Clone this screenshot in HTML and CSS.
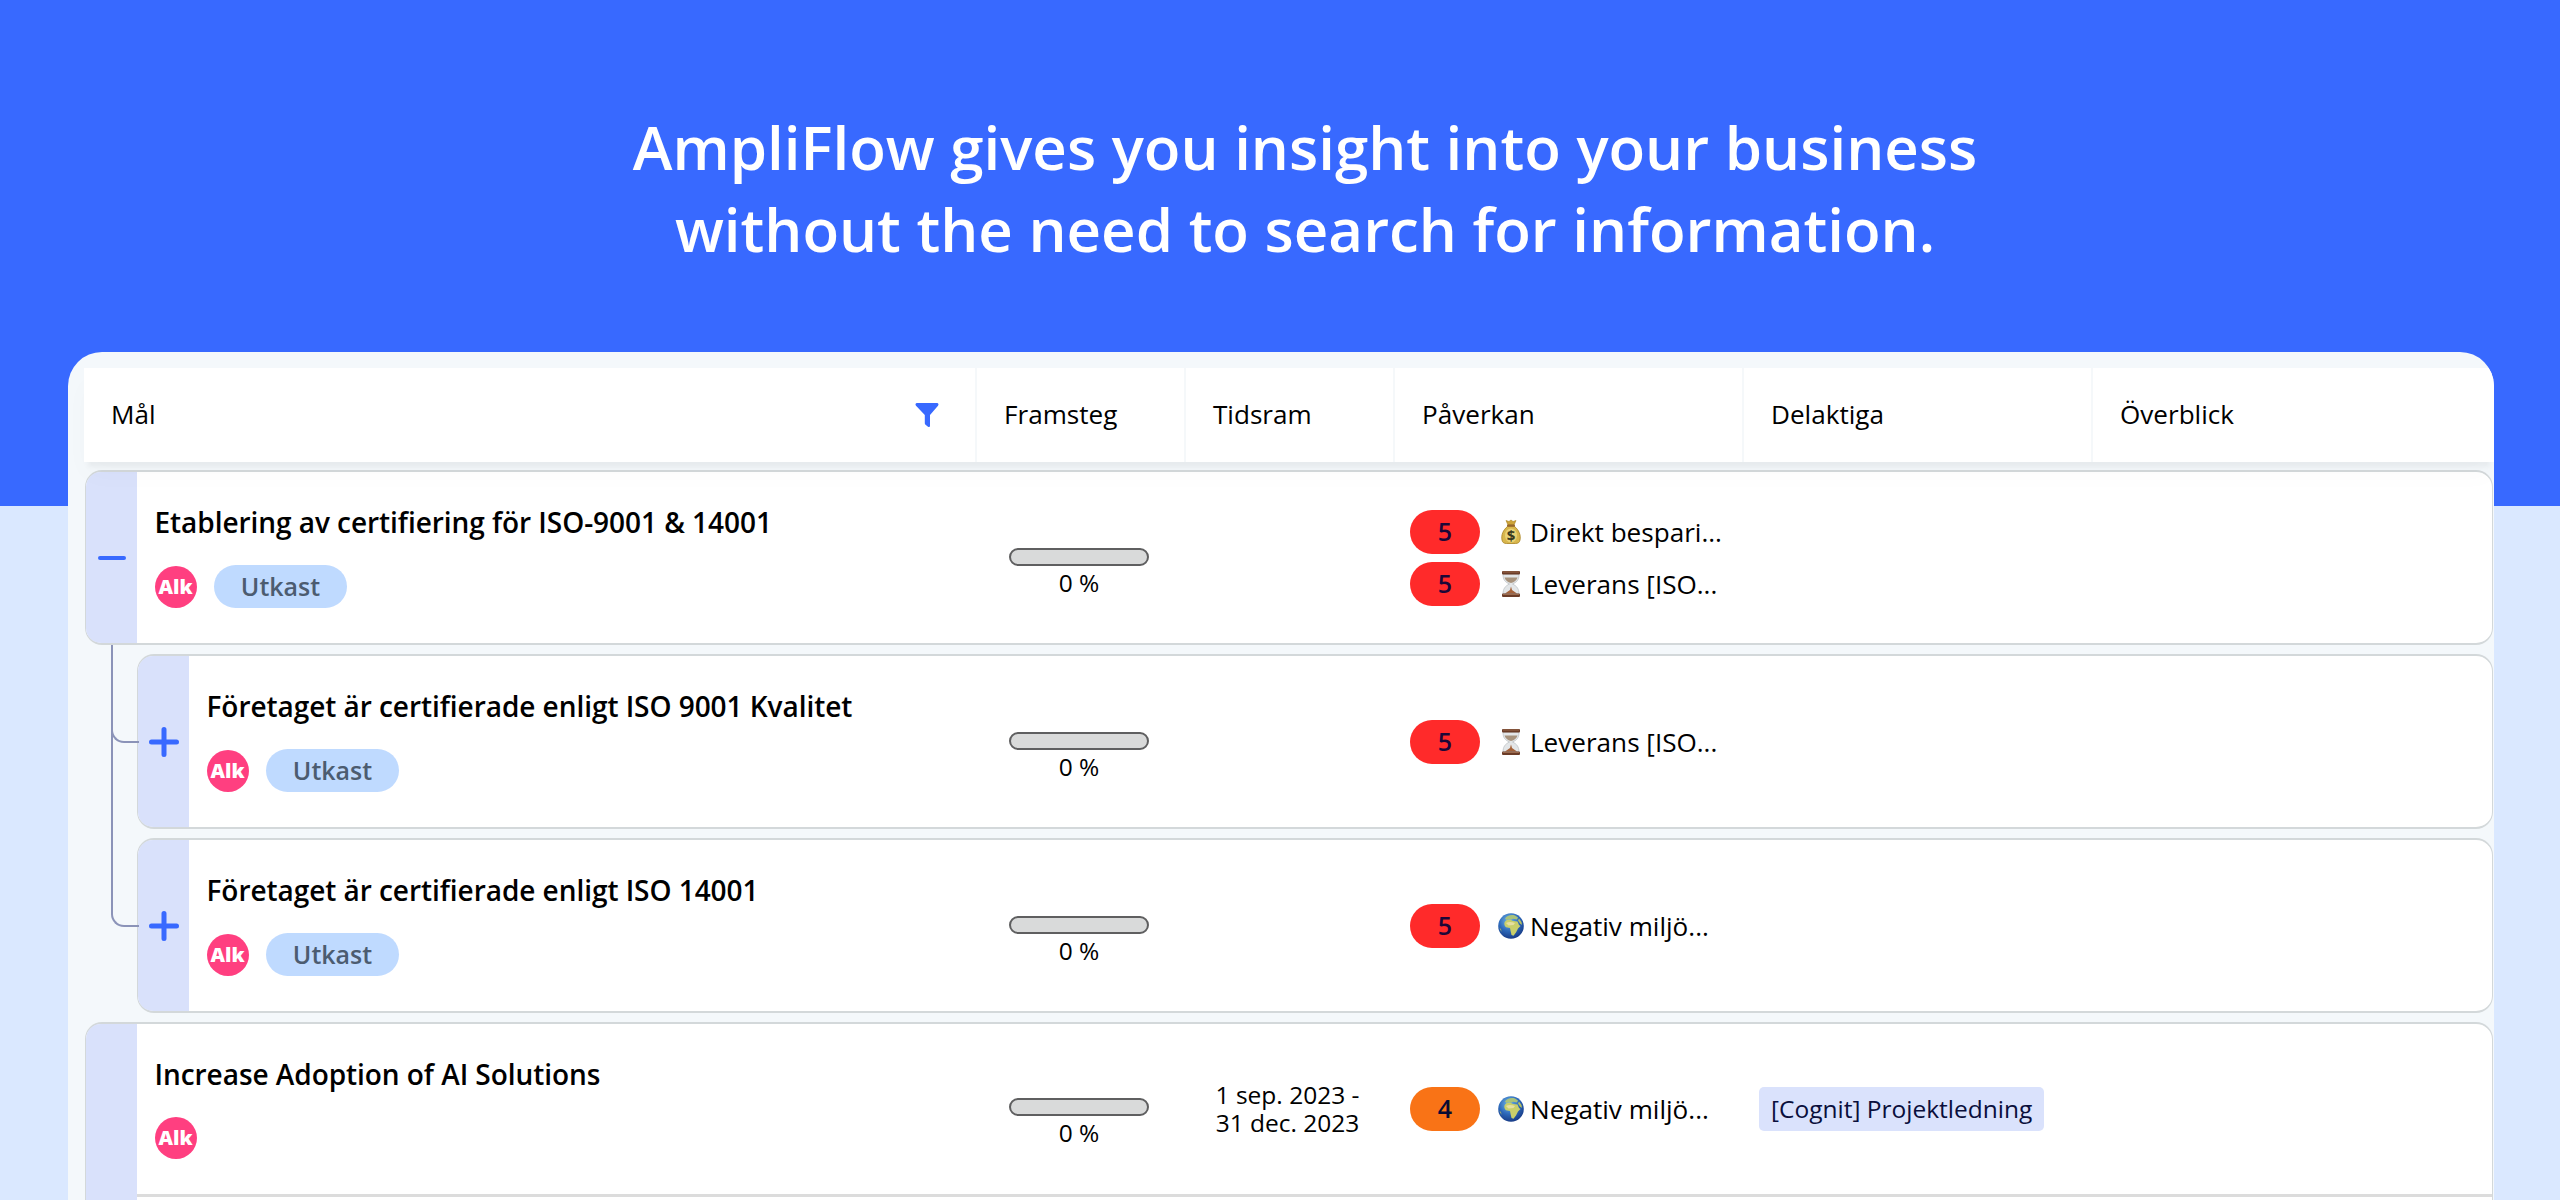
FILE: index.html
```html
<!DOCTYPE html>
<html lang="sv">

<head>
    <meta charset="UTF-8" />
    <meta name="viewport" content="width=device-width, initial-scale=1.0" />
    <title>AmpliFlow</title>
    <link rel="stylesheet" href="styles.css">
</head>

<body>
    <!-- Shared icons -->
    <svg class="sprite" width="0" height="0">
        <symbol id="plus" viewBox="0 0 30 30">
            <path d="M15 2.500v25M2.500 15h25" stroke="#3869ff" stroke-width="5" stroke-linecap="round" />
        </symbol>
        <symbol id="hourglass" viewBox="0 0 26 26">
            <path d="M5 3h16c0 6-2 8-6.500 10C19 15 21 18 21 23H5c0-5 2-8 6.500-10C7 11 5 9 5 3z" fill="#e3e6e8" stroke="#b9bdc0" stroke-width=".7" />
            <path d="M6.500 6.500h13c-1 3-3 4.500-6.500 5.500-3.500-1-5.500-2.500-6.500-5.500z" fill="#a8937d" />
            <path d="M13 15.500l1 3.500 5 3.500H7l5-3.500z" fill="#a5623a" />
            <rect x="4" y="0" width="18" height="3.500" rx="1" fill="#6b3c27" />
            <rect x="4" y="22.500" width="18" height="3.500" rx="1" fill="#6b3c27" />
            <path d="M5 1h16M5 23.500h16" stroke="#a87758" stroke-width=".8" />
        </symbol>
        <symbol id="globe" viewBox="0 0 26 26">
            <circle cx="13" cy="13" r="12.800" fill="url(#sea)" />
            <path d="M6.500 9.500c.5-2 3-3.500 5.500-3l3 1.500 4.500.5 1.500 3.500 1.500 1-2.500 2.500-2 4-2.500 3.200-2-.7-.8-3.500-.7-3.500-4-.8c-1.500-1-2-3-1.500-4.700z" fill="#c9cf6a" />
            <path d="M7 5.500C9 2.500 13 1.300 17 2.500l3 2-1 2-4-.8-2 1-2.500-.7-2 1z" fill="#a9c27a" />
            <path d="M21 5.500l2.500 3.500.5 3-2-1.500-2-3z" fill="#b5bf62" />
            <path d="M1.500 15l1.500 1 .5 3z" fill="#b5bf62" />
            <path d="M8 10c3-1.500 6-1 9 0l-1.500 2-5 .5z" fill="#e6dfa1" />
        </symbol>
        <radialGradient id="sea" cx=".42" cy=".3" r=".72">
            <stop offset="0" stop-color="#72b8e8" />
            <stop offset=".55" stop-color="#2d69ba" />
            <stop offset="1" stop-color="#173a85" />
        </radialGradient>
    </svg>

    <!-- Headline -->
    <header class="hero">
        <h1>AmpliFlow gives you insight into your business<br>without the need to search for information.</h1>
    </header>

    <!-- Goals table -->
    <main class="panel">
        <div class="table-head">
            <div class="head-cell head-goal">
                <span>Mål</span>
                <svg class="filter" viewBox="0 0 24 26">
                    <path d="M2 1h20c1.500 0 2 1.500 1 2.700L15 13v10.500c0 1.500-1 2-2 1.200l-2.500-2c-.5-.4-.7-.8-.7-1.500V13L1 3.700C0 2.500.5 1 2 1z" fill="#3869ff" />
                </svg>
            </div>
            <div class="head-cell">Framsteg</div>
            <div class="head-cell">Tidsram</div>
            <div class="head-cell">Påverkan</div>
            <div class="head-cell">Delaktiga</div>
            <div class="head-cell">Överblick</div>
        </div>

        <div class="rows">
            <section class="row">
                <div class="toggle"><span class="minus"></span></div>
                <div class="goal">
                    <h2>Etablering av certifiering för ISO-9001 &amp; 14001</h2>
                    <div class="meta">
                        <span class="avatar">Alk</span>
                        <span class="status">Utkast</span>
                    </div>
                </div>
                <div class="progress"><div class="bar"></div>0 %</div>
                <div class="period"></div>
                <div class="impact">
                    <div class="impact-item">
                        <span class="score">5</span>
                        <svg class="emoji" viewBox="0 0 26 26">
                            <path d="M10 7C5 11 3 16 4 21c.4 2.500 2 3.500 4.500 3.500h9c2.500 0 4.100-1 4.500-3.500 1-5-1-10-6-14z" fill="#d8b64c" stroke="#a8821f" stroke-width=".8" />
                            <path d="M10 6L8 1.500l3 1 2-1.500 2 1.500 3-1L16 6z" fill="#cda338" stroke="#a8821f" stroke-width=".6" />
                            <rect x="9" y="5.500" width="8" height="2.200" rx="1" fill="#96672c" />
                            <ellipse cx="13" cy="16.500" rx="6" ry="7" fill="#e9d275" />
                            <text x="13" y="21.500" text-anchor="middle" class="dollar">$</text>
                        </svg>
                        Direkt bespari...
                    </div>
                    <div class="impact-item"><span class="score">5</span><svg class="emoji"><use href="#hourglass" /></svg>Leverans [ISO...</div>
                </div>
                <div class="people"></div>
                <div class="overview"></div>
            </section>

            <section class="row child">
                <div class="toggle"><svg class="plus"><use href="#plus" /></svg></div>
                <div class="goal">
                    <h2>Företaget är certifierade enligt ISO 9001 Kvalitet</h2>
                    <div class="meta">
                        <span class="avatar">Alk</span>
                        <span class="status">Utkast</span>
                    </div>
                </div>
                <div class="progress"><div class="bar"></div>0 %</div>
                <div class="period"></div>
                <div class="impact">
                    <div class="impact-item"><span class="score">5</span><svg class="emoji"><use href="#hourglass" /></svg>Leverans [ISO...</div>
                </div>
                <div class="people"></div>
                <div class="overview"></div>
            </section>

            <section class="row child child-last">
                <div class="toggle"><svg class="plus"><use href="#plus" /></svg></div>
                <div class="goal">
                    <h2>Företaget är certifierade enligt ISO 14001</h2>
                    <div class="meta">
                        <span class="avatar">Alk</span>
                        <span class="status">Utkast</span>
                    </div>
                </div>
                <div class="progress"><div class="bar"></div>0 %</div>
                <div class="period"></div>
                <div class="impact">
                    <div class="impact-item"><span class="score">5</span><svg class="emoji"><use href="#globe" /></svg>Negativ miljö...</div>
                </div>
                <div class="people"></div>
                <div class="overview"></div>
            </section>

            <section class="row open">
                <div class="toggle"></div>
                <div class="goal">
                    <h2>Increase Adoption of AI Solutions</h2>
                    <div class="meta">
                        <span class="avatar">Alk</span>
                    </div>
                </div>
                <div class="progress"><div class="bar"></div>0 %</div>
                <div class="period">1 sep. 2023 -<br>31 dec. 2023</div>
                <div class="impact">
                    <div class="impact-item"><span class="score medium">4</span><svg class="emoji"><use href="#globe" /></svg>Negativ miljö...</div>
                </div>
                <div class="people"><span class="tag">[Cognit] Projektledning</span></div>
                <div class="overview"></div>
                <div class="next"></div>
            </section>
        </div>
    </main>
</body>
</html>
```
FILE: styles.css
```css
* {
    box-sizing: border-box;
}

body {
    margin: 0;
    height: 1200px;
    overflow: hidden;
    background: linear-gradient(#3869ff 506px, #dae8ff 506px);
    font-family: "Open Sans", "Noto Sans", sans-serif;
    font-size: 26.1px;
    color: #000;
}

.sprite {
    display: block;
}

/* Headline */
.hero {
    height: 352px;
    padding: 106px 0 0 50px;
}

h1 {
    margin: 0;
    font-size: 60px;
    font-weight: 600;
    line-height: 82px;
    text-align: center;
    color: #fff;
}

/* Panel */
.panel {
    width: 2426px;
    height: 848px;
    margin-left: 68px;
    padding: 16px 0 0 16px;
    background: #f4f8fb;
    border-radius: 34px 34px 0 0;
    overflow: hidden;
}

.table-head {
    position: relative;
    z-index: 1;
    display: grid;
    grid-template-columns: 893px 209px 209px 349px 349px 1fr;
    height: 94px;
    background: #fff;
    box-shadow: 0 9px 4px -4px rgba(0, 0, 0, 0.04), 0 14px 26px -2px rgba(0, 0, 0, 0.025);
}

.head-cell {
    display: flex;
    align-items: center;
    padding: 0 0 2px 27px;
    border-right: 2px solid #f5f8fa;
}

.head-cell:last-child {
    border-right: none;
}

.head-goal {
    justify-content: space-between;
    padding-right: 36px;
}

.filter {
    width: 24px;
    height: 26px;
    margin-top: 2px;
}

/* Rows */
.rows {
    display: flex;
    flex-direction: column;
    gap: 9px;
    padding: 8px 1px 0;
}

.row {
    position: relative;
    display: grid;
    grid-template-columns: 51px 1fr 209px 209px 349px 349px 400px;
    height: 175px;
    background: #fff;
    border: 2px solid #d3d8da;
    border-left-width: 1px;
    border-right-width: 1px;
    border-radius: 17px;
    flex-shrink: 0;
}

.child {
    margin-left: 52px;
}

/* Tree lines from the parent to its children */
.child::before {
    content: "";
    position: absolute;
    left: -27px;
    top: -11px;
    width: 26px;
    height: 96px;
    border-left: 2px solid #8b93b8;
    border-bottom: 2px solid #8b93b8;
    border-bottom-left-radius: 13px;
}

.child-last::before {
    top: -195px;
    height: 280px;
}

.toggle {
    display: flex;
    align-items: center;
    justify-content: center;
    background: #d9e1fb;
    border-radius: 15px 0 0 15px;
}

.minus {
    width: 28px;
    height: 4px;
    border-radius: 2px;
    background: #3869ff;
}

.plus {
    width: 30px;
    height: 30px;
}

.goal {
    padding: 31px 0 0 17.5px;
}

h2 {
    margin: 0;
    font-size: 28px;
    font-weight: 600;
    line-height: 38px;
    letter-spacing: -0.05px;
    white-space: nowrap;
}

.meta {
    display: flex;
    align-items: center;
    gap: 17.5px;
    margin-top: 24px;
}

.avatar {
    width: 42px;
    height: 42px;
    border-radius: 50%;
    background: #ff3f80;
    color: #fff;
    font-size: 20px;
    font-weight: 800;
    line-height: 42px;
    text-align: center;
}

.status {
    width: 133px;
    height: 43px;
    border-radius: 22px;
    background: #bfdaff;
    color: #4c5c70;
    font-size: 25px;
    font-weight: 600;
    line-height: 43px;
    text-align: center;
}

.progress {
    padding: 76px 0 0 33px;
    width: 173px;
    font-size: 24.5px;
    line-height: 34px;
    text-align: center;
}

.bar {
    height: 18px;
    border: 2px solid #5f5f60;
    border-radius: 9px;
    background: #d9dada;
}

.period {
    align-self: center;
    padding-right: 4px;
    font-size: 24.5px;
    line-height: 28px;
    text-align: center;
}

.impact {
    display: flex;
    flex-direction: column;
    justify-content: center;
    gap: 8px;
    padding-left: 16px;
}

.impact-item {
    display: flex;
    align-items: center;
    white-space: nowrap;
}

.score {
    width: 70px;
    height: 44px;
    border-radius: 22px;
    background: #ff2a2a;
    color: #1c0738;
    font-size: 25px;
    font-weight: 600;
    line-height: 43px;
    text-align: center;
}

.score.medium {
    background: #f97316;
    color: #080c33;
}

.emoji {
    width: 26px;
    height: 26px;
    margin: 0 6px 0 18px;
}

.dollar {
    font-size: 15px;
    font-weight: 700;
    fill: #3a3a20;
}

.people {
    display: flex;
    align-items: center;
    padding-left: 16px;
}

.tag {
    height: 44px;
    padding: 0 12px;
    border-radius: 5px;
    background: #dae2fc;
    color: #0a0f3c;
    font-size: 24.5px;
    line-height: 43px;
    white-space: nowrap;
}

/* Expanded goal, its toggle runs past the first line */
.open {
    grid-template-rows: 170px 1fr;
    height: 350px;
}

.open .toggle {
    grid-row: 1 / 3;
}

.open .progress {
    padding-top: 74px;
}

.next {
    grid-column: 2 / 8;
    border-top: 3px solid #dcdcdc;
}
```
